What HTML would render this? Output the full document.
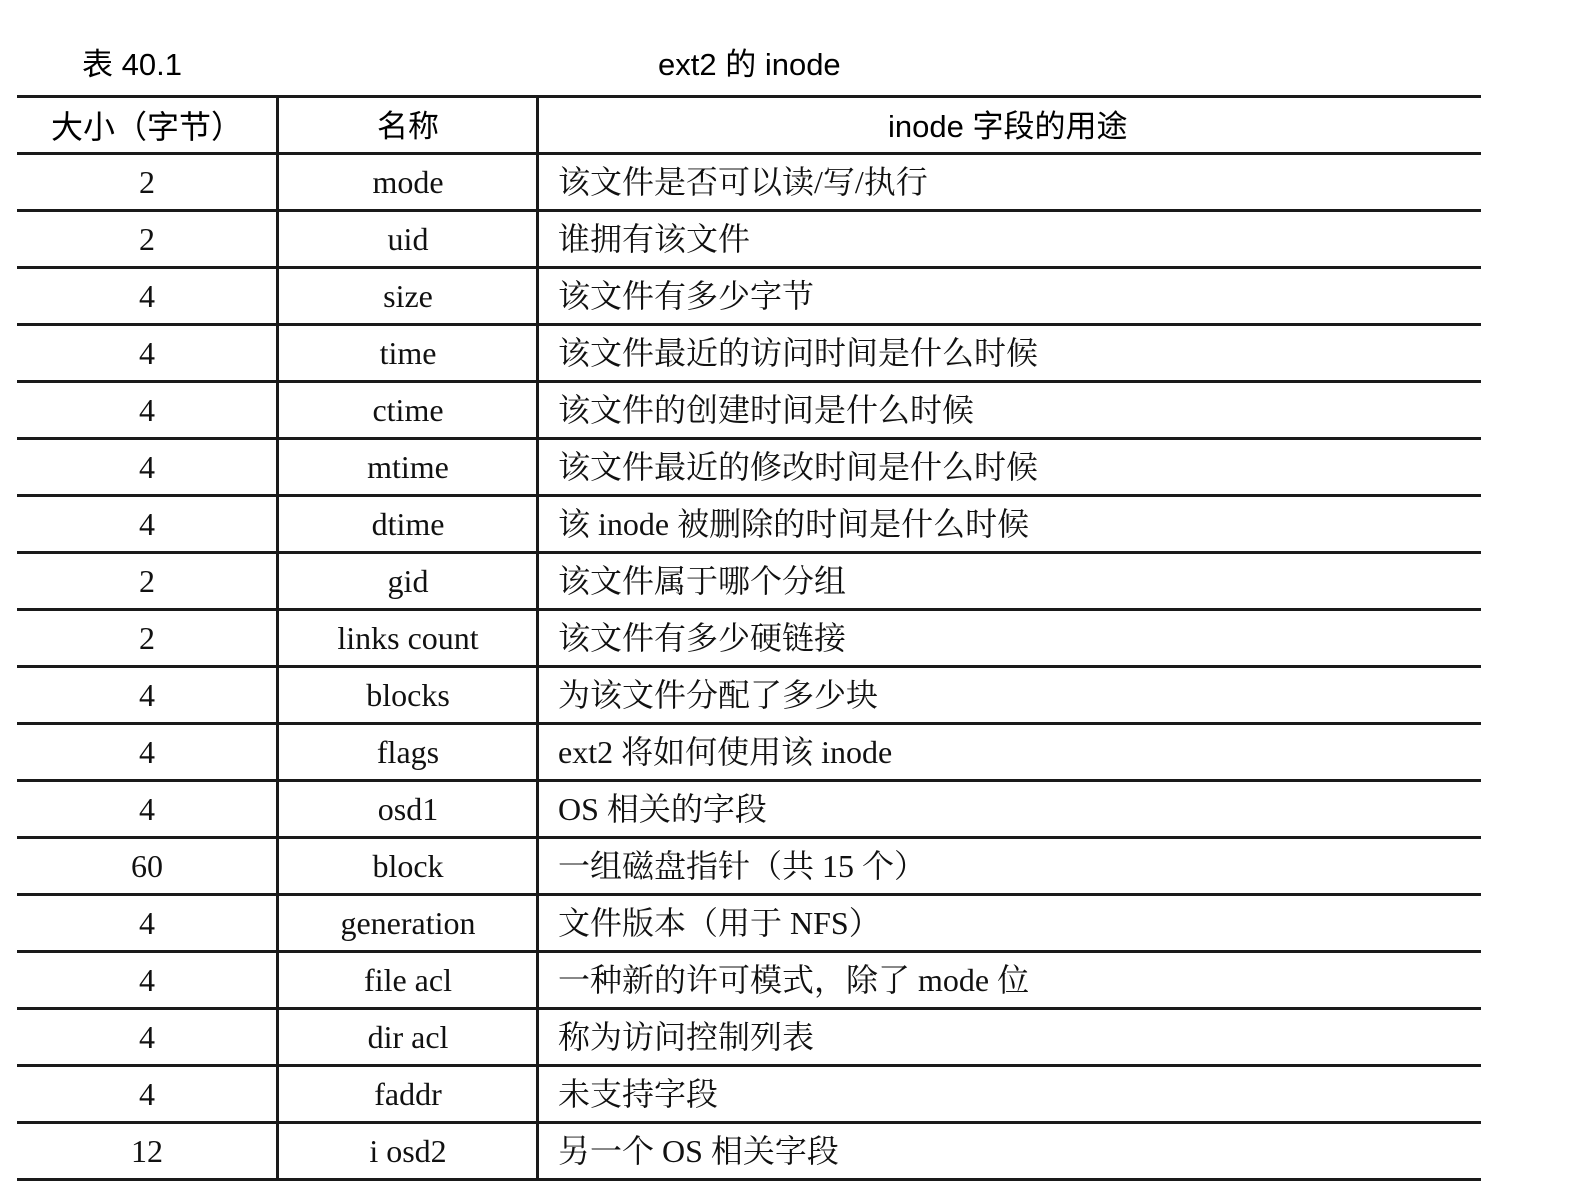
<!DOCTYPE html>
<html><head><meta charset="utf-8"><style>
body{margin:0;width:1577px;height:1196px;background:#fff;position:relative;overflow:hidden}
.h{position:absolute;left:17px;width:1464px;height:3px;background:#1a1a1a}
.v{position:absolute;top:96px;height:1085px;width:3px;background:#1a1a1a}
.t{position:absolute;white-space:nowrap;line-height:34px;color:#111}
.s{font-family:"Liberation Serif","Noto Serif CJK SC",serif;font-size:32px}
.sa{font-family:"Liberation Sans","Noto Sans CJK SC",sans-serif;font-size:31px;color:#000}
.c1{left:17px;width:260px;text-align:center}
.c2{left:279px;width:258px;text-align:center}
.c3{left:558px}
</style></head><body>
<div class="t sa" style="left:82px;top:48px">表 40.1</div>
<div class="t sa" style="left:658px;top:48px">ext2 的 inode</div>
<div class="v" style="left:276px"></div>
<div class="v" style="left:536px"></div>
<div id="lines"></div>
<div class="t sa c1" style="top:110px;font-size:32px">大小（字节）</div>
<div class="t sa c2" style="top:110px">名称</div>
<div class="t sa" style="left:888px;top:110px">inode 字段的用途</div>
<script>
var rows=[["2","mode","该文件是否可以读/写/执行"],["2","uid","谁拥有该文件"],["4","size","该文件有多少字节"],["4","time","该文件最近的访问时间是什么时候"],["4","ctime","该文件的创建时间是什么时候"],["4","mtime","该文件最近的修改时间是什么时候"],["4","dtime","该 inode 被删除的时间是什么时候"],["2","gid","该文件属于哪个分组"],["2","links count","该文件有多少硬链接"],["4","blocks","为该文件分配了多少块"],["4","flags","ext2 将如何使用该 inode"],["4","osd1","OS 相关的字段"],["60","block","一组磁盘指针（共 15 个）"],["4","generation","文件版本（用于 NFS）"],["4","file acl","一种新的许可模式，除了 mode 位"],["4","dir acl","称为访问控制列表"],["4","faddr","未支持字段"],["12","i osd2","另一个 OS 相关字段"]];
var h="";var rh=57;
for(var i=0;i<=19;i++){h+='<div class="h" style="top:'+Math.round(95+i*rh)+'px"></div>';}
for(var i=0;i<rows.length;i++){var y=Math.round(95+(i+1)*rh+13);var r=rows[i];
h+='<div class="t s c1" style="top:'+y+'px">'+r[0]+'</div><div class="t s c2" style="top:'+y+'px">'+r[1]+'</div><div class="t s c3" style="top:'+y+'px">'+r[2]+'</div>';}
document.getElementById("lines").innerHTML=h;
</script>
</body></html>
